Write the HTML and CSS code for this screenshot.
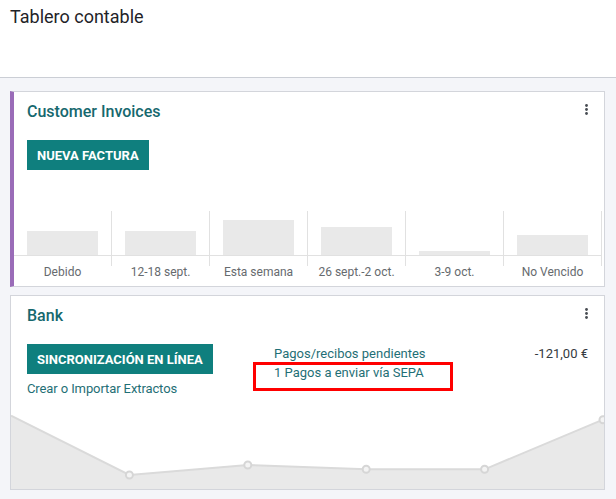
FILE: index.html
```html
<!DOCTYPE html>
<html lang="es">
<head>
<meta charset="utf-8">
<title>Tablero contable</title>
<link rel="stylesheet" href="styles.css">
</head>
<body>
<header class="topbar">
  <h1 class="page-title">Tablero contable</h1>
</header>
<main class="dashboard">
  <section class="card card-sale">
    <div class="card-head">
      <h2 class="card-title">Customer Invoices</h2>
      <span class="kebab"><svg width="3" height="11" viewBox="0 0 3 11"><circle cx="1.5" cy="1.5" r="1.4"/><circle cx="1.5" cy="5.5" r="1.4"/><circle cx="1.5" cy="9.5" r="1.4"/></svg></span>
    </div>
    <button class="btn-primary">NUEVA FACTURA</button>
    <div class="bar-chart">
      <div class="cols">
        <div class="col"><div class="plot"><div class="bar" style="height:24px"></div></div></div>
        <div class="col"><div class="plot"><div class="bar" style="height:24px"></div></div></div>
        <div class="col"><div class="plot"><div class="bar" style="height:35px"></div></div></div>
        <div class="col"><div class="plot"><div class="bar" style="height:28px"></div></div></div>
        <div class="col"><div class="plot"><div class="bar" style="height:4px"></div></div></div>
        <div class="col"><div class="plot"><div class="bar" style="height:20px"></div></div></div>
      </div>
      <div class="labels">
        <span>Debido</span>
        <span>12-18 sept.</span>
        <span>Esta semana</span>
        <span>26 sept.-2 oct.</span>
        <span>3-9 oct.</span>
        <span>No Vencido</span>
      </div>
    </div>
  </section>

  <section class="card card-bank">
    <div class="card-head">
      <h2 class="card-title">Bank</h2>
      <span class="kebab"><svg width="3" height="11" viewBox="0 0 3 11"><circle cx="1.5" cy="1.5" r="1.4"/><circle cx="1.5" cy="5.5" r="1.4"/><circle cx="1.5" cy="9.5" r="1.4"/></svg></span>
    </div>
    <div class="bank-body">
      <div class="bank-left">
        <button class="btn-primary">SINCRONIZACIÓN EN LÍNEA</button>
        <a class="link link-import" href="#">Crear o Importar Extractos</a>
      </div>
      <div class="bank-right">
        <div class="stat-row">
          <a class="link" href="#">Pagos/recibos pendientes</a>
          <span class="amount">-121,00 €</span>
        </div>
        <div class="stat-row highlight-row">
          <a class="link" href="#">1 Pagos a enviar vía SEPA</a>
          <span class="highlight"></span>
        </div>
      </div>
    </div>
    <svg class="line-graph" width="593" height="79" viewBox="0 0 593 79">
      <path class="area" d="M0 5.7 L118.4 65 L236.8 55 L355.2 59.3 L473.6 59.3 L592 9.7 L593 9.3 L593 79 L0 79 Z"/>
      <path class="line" d="M0 5.7 L118.4 65 L236.8 55 L355.2 59.3 L473.6 59.3 L592 9.7"/>
      <circle class="pt" cx="118.4" cy="65" r="3.5"/>
      <circle class="pt" cx="236.8" cy="55" r="3.5"/>
      <circle class="pt" cx="355.2" cy="59.3" r="3.5"/>
      <circle class="pt" cx="473.6" cy="59.3" r="3.5"/>
      <circle class="pt" cx="592" cy="9.7" r="3.5"/>
    </svg>
  </section>
</main>
</body>
</html>
```

FILE: styles.css
```css
* { box-sizing: border-box; }

html, body {
  margin: 0;
  padding: 0;
}

body {
  background: #f4f5f9;
  font-family: Roboto, "Liberation Sans", sans-serif;
  color: #212529;
  width: 616px;
  height: 499px;
  overflow: hidden;
}

.topbar {
  background: #ffffff;
  height: 78px;
  border-bottom: 1px solid #cbced5;
  padding: 6px 10px 0;
}

.page-title {
  margin: 0;
  font-size: 18px;
  font-weight: 400;
  line-height: normal;
  color: #1f2328;
}

.dashboard {
  padding-top: 13px;
  display: flex;
  flex-direction: column;
  gap: 8px;
}

.card {
  background: #ffffff;
  border: 1px solid #d3d5db;
  margin: 0 11px 0 10px;
  width: 595px;
  padding: 10px 16px 0 16px;
}

.card-sale {
  border-left: 4px solid #9a6cb8;
  padding-left: 13px;
  padding-bottom: 7px;
}

.card-head {
  display: flex;
  justify-content: space-between;
  align-items: flex-start;
}

.card-title {
  margin: 0;
  font-size: 16px;
  font-weight: 500;
  line-height: normal;
  color: #16686e;
}

.kebab {
  display: block;
  margin-top: 2px;
  line-height: 0;
}

.kebab svg { fill: #474c52; }

.btn-primary {
  display: block;
  margin-top: 19px;
  height: 30px;
  padding: 0 10px;
  border: 0;
  border-radius: 0;
  background: #0f7f7e;
  color: #ffffff;
  font-family: Roboto, "Liberation Sans", sans-serif;
  font-size: 13px;
  font-weight: 700;
  letter-spacing: 0;
}

.bar-chart {
  margin-top: 41px;
  margin-left: -13px;
  width: 588px;
}

.cols {
  display: flex;
}

.col {
  width: 98px;
  height: 55px;
  border-right: 1px solid #e1e1e1;
}

.plot {
  height: 45px;
  border-bottom: 1px solid #e1e1e1;
  display: flex;
  align-items: flex-end;
  justify-content: center;
}

.bar {
  width: 71px;
  background: #e9e9e9;
}

.labels {
  display: flex;
  margin-top: -1px;
}

.labels span {
  width: 98px;
  padding-right: 1px;
  text-align: center;
  font-size: 12px;
  line-height: normal;
  color: #666a6e;
  white-space: nowrap;
}

.bank-body {
  display: flex;
  margin-top: 19px;
}

.bank-left {
  width: 247px;
  display: flex;
  flex-direction: column;
  align-items: flex-start;
}

.bank-left .btn-primary { margin-top: 0; }

.link-import {
  margin-top: 7px;
  letter-spacing: -0.1px;
}

.link {
  font-size: 13px;
  line-height: normal;
  color: #1f6f76;
  text-decoration: none;
}

.bank-right {
  flex: 1;
  display: flex;
  flex-direction: column;
}

.stat-row {
  display: flex;
  justify-content: space-between;
  font-size: 13px;
  line-height: 19px;
}

.stat-row .link { line-height: 19px; }

.amount {
  color: #343a40;
}

.highlight-row {
  position: relative;
}

.highlight {
  position: absolute;
  left: -21px;
  top: -1px;
  width: 200px;
  height: 29px;
  border: 3px solid #ff0000;
}

.line-graph {
  display: block;
  margin: 14px -16px 0 -16px;
}

.area { fill: #e9e9e9; }
.line { fill: none; stroke: #dadada; stroke-width: 2; }
.pt { fill: #f4f4f4; stroke: #d6d6d6; stroke-width: 2; }
```
